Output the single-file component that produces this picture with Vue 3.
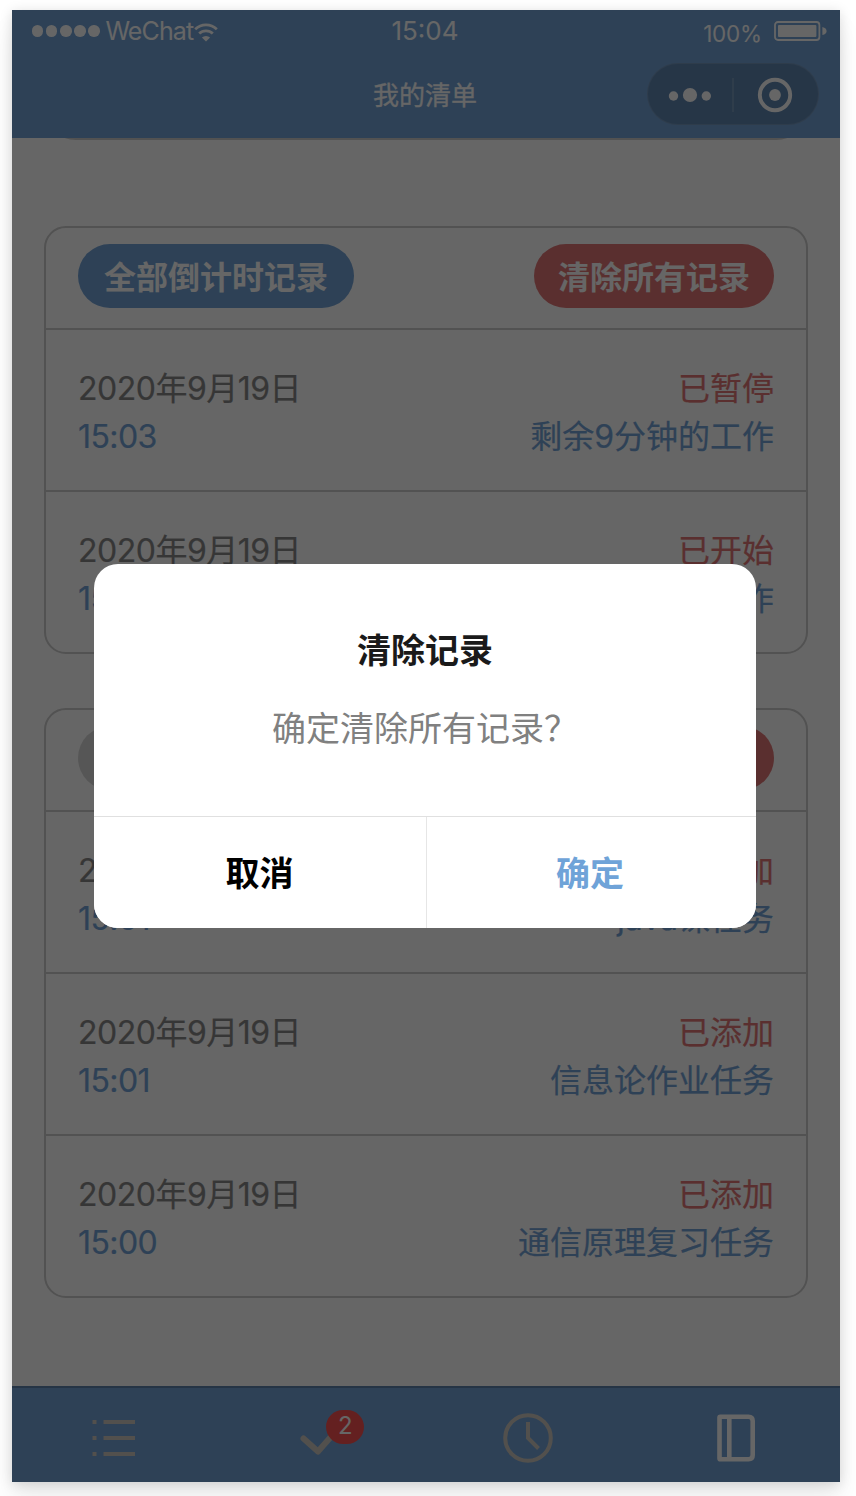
<template>
  <div class="page">
    <div class="phone">
      <header class="top">
        <div class="status">
          <div class="carrier">
            <span v-for="n in 5" :key="n" class="signal"></span>
            <span class="carrier-name">WeChat</span>
            <svg class="wifi" width="24" height="20" viewBox="0 0 24 20">
              <path d="M1.2 7.2a15.5 15.5 0 0 1 21.6 0" fill="none" stroke="#fff" stroke-width="2.8" />
              <path d="M5.2 11.6a9.8 9.8 0 0 1 13.6 0" fill="none" stroke="#fff" stroke-width="2.8" />
              <path d="M12 19.6L7.9 15.6a5.8 5.8 0 0 1 8.2 0z" fill="#fff" />
            </svg>
          </div>
          <span class="clock">15:04</span>
          <div class="battery">
            <span class="percent">100%</span>
            <svg width="53" height="20" viewBox="0 0 53 20">
              <rect x="1" y="1" width="44.4" height="18" rx="3" fill="none" stroke="#fff" stroke-width="1.8" />
              <rect x="4" y="4" width="38.4" height="12" rx="1" fill="#fff" />
              <path d="M48.4 6q4.2 1 4.2 4t-4.2 4z" fill="#fff" />
            </svg>
          </div>
        </div>
        <div class="nav">
          <h1>我的清单</h1>
          <div class="capsule">
            <svg width="170" height="60" viewBox="0 0 170 60">
              <g fill="#fff">
                <circle cx="25.5" cy="32" r="4.7" />
                <circle cx="42" cy="31" r="7.1" />
                <circle cx="58.3" cy="32" r="4.7" />
                <circle cx="127" cy="31" r="5.9" />
              </g>
              <path d="M85 14v34" stroke="#fff" stroke-opacity=".14" stroke-width="2" />
              <circle cx="127" cy="31" r="15.2" fill="none" stroke="#fff" stroke-width="3.9" />
            </svg>
          </div>
        </div>
      </header>

      <main class="content">
        <section class="card card-prev"></section>
        <section v-for="group in groups" :key="group.title" class="card">
          <div class="card-head">
            <button class="pill" :class="group.type">{{ group.title }}</button>
            <button class="pill danger" @click="showModal = true">清除所有记录</button>
          </div>
          <div v-for="(item, i) in group.items" :key="i" class="record">
            <div class="line">
              <span class="date">2020年9月19日</span>
              <span class="state">{{ item.state }}</span>
            </div>
            <div class="line">
              <span class="time">{{ item.time }}</span>
              <span class="name">{{ item.name }}</span>
            </div>
          </div>
        </section>
      </main>

      <footer class="tabs">
        <div class="tab">
          <svg width="48" height="48" viewBox="0 0 48 48" stroke="#cdc8c0" stroke-width="4">
            <path d="M2.5 8h4M2.5 24h4M2.5 40h4M13.5 8H45M13.5 24H45M13.5 40H45" />
          </svg>
        </div>
        <div class="tab">
          <svg width="48" height="48" viewBox="0 0 48 48">
            <path d="M7.5 24.5L22 37.5L40 17" fill="none" stroke="#cdc8c0" stroke-width="6" stroke-linecap="round" stroke-linejoin="round" />
          </svg>
          <span class="badge">2</span>
        </div>
        <div class="tab">
          <svg width="52" height="52" viewBox="0 0 52 52" fill="none" stroke="#cdc8c0" stroke-width="4">
            <circle cx="26" cy="26" r="22.8" />
            <path d="M26 10v16l10.5 10.5" />
          </svg>
        </div>
        <div class="tab">
          <svg width="48" height="48" viewBox="0 0 48 48" fill="none" stroke="#fff" stroke-width="4.6">
            <path d="M10.3 2.8H38.5q4.2 0 4.2 4.2v34q0 4.2-4.2 4.2H10.3q-.8 0-.8-.8V3.6q0-.8.8-.8zM19.3 2.8v42.4" />
          </svg>
        </div>
      </footer>

      <div v-if="showModal" class="mask">
        <div class="modal">
          <div class="modal-body">
            <h2>清除记录</h2>
            <p>确定清除所有记录？</p>
          </div>
          <div class="modal-foot">
            <button @click="showModal = false">取消</button>
            <button class="confirm" @click="clearAll">确定</button>
          </div>
        </div>
      </div>
    </div>
  </div>
</template>

<script setup>
import { ref } from 'vue';

const showModal = ref(true);

const groups = ref([
  {
    title: '全部倒计时记录',
    type: 'primary',
    items: [
      { time: '15:03', state: '已暂停', name: '剩余9分钟的工作' },
      { time: '15:03', state: '已开始', name: '工作' },
    ],
  },
  {
    title: '记录',
    type: 'muted',
    items: [
      { time: '15:01', state: '已添加', name: 'java课任务' },
      { time: '15:01', state: '已添加', name: '信息论作业任务' },
      { time: '15:00', state: '已添加', name: '通信原理复习任务' },
    ],
  },
]);

function clearAll() {
  groups.value.forEach((group) => {
    group.items = [];
  });
  showModal.value = false;
}
</script>

<style>
body {
  background: #fff;
}
</style>

<style scoped>
.page {
  box-sizing: border-box;
  height: 1496px;
  padding: 10px 0 0 12px;
  overflow: hidden;
}

.phone {
  position: relative;
  display: flex;
  flex-direction: column;
  width: 828px;
  height: 1472px;
  background: #fff;
  font-family: Inter, "Noto Sans CJK SC", sans-serif;
  box-shadow: 0 18px 24px rgba(0, 0, 0, 0.07), 0 2px 12px rgba(0, 0, 0, 0.14);
}

button {
  border: none;
  padding: 0;
  font-family: inherit;
}

.top {
  height: 128px;
  flex: none;
  background: #73a3d7;
  color: #fff;
}

.status {
  display: grid;
  grid-template-columns: 1fr auto 1fr;
  align-items: center;
  height: 42px;
  padding: 0 14px 0 20px;
  font-size: 25px;
}

.carrier {
  display: flex;
  align-items: center;
}

.carrier-name {
  margin-left: 3px;
  letter-spacing: -0.9px;
}

.signal {
  width: 11.4px;
  height: 11.4px;
  margin-right: 2.7px;
  border-radius: 50%;
  background: #fff;
}

.wifi {
  margin: 2px 0 0 1px;
}

.clock {
  margin: -2px 8px 0 0;
  font-size: 26px;
}

.battery {
  display: flex;
  justify-content: flex-end;
  align-items: center;
  gap: 12px;
  margin-right: -1px;
  font-size: 22.5px;
}

.percent {
  margin-top: 5px;
  letter-spacing: -0.2px;
}

.nav {
  position: relative;
  display: flex;
  justify-content: center;
  align-items: center;
  height: 86px;
}

.nav h1 {
  margin: -4px 2px 0 0;
  font-size: 26px;
  font-weight: 400;
  -webkit-text-stroke: 0.3px;
}

.capsule {
  position: absolute;
  right: 21px;
  top: 11px;
  box-sizing: border-box;
  width: 172px;
  height: 62px;
  border: 1px solid rgba(255, 255, 255, 0.12);
  border-radius: 31px;
  background: rgba(0, 0, 0, 0.17);
}

.capsule svg {
  display: block;
}

.content {
  flex: 1;
  min-height: 0;
  padding: 0 32px;
  overflow: hidden;
}

.card {
  margin-bottom: 54px;
  border: 2px solid #ccc;
  border-radius: 22px;
}

.card-prev {
  height: 70px;
  margin-top: -72px;
  margin-bottom: 86px;
  border-radius: 32px;
}

.card-head {
  display: flex;
  justify-content: space-between;
  height: 84px;
  padding: 16px 32px 0;
}

.pill {
  height: 64px;
  padding: 0 26px 2px;
  border-radius: 32px;
  color: #fff;
  font-size: 32px;
  font-weight: 700;
}

.primary {
  background: #73a3d7;
}

.muted {
  background: #d8d8d8;
}

.danger {
  background: #e17777;
  padding: 0 24px 2px;
}

.record {
  height: 125px;
  padding: 35px 32px 0;
  border-top: 2px solid #ccc;
}

.line {
  display: flex;
  justify-content: space-between;
  height: 48px;
  font-size: 32px;
  line-height: 48px;
  -webkit-text-stroke: 0.2px;
}

.date {
  color: #888;
  letter-spacing: -0.5px;
}

.time {
  letter-spacing: -0.6px;
}

.time,
.name {
  color: #73a3d7;
}

.state {
  color: #e17777;
}

.tabs {
  display: flex;
  flex: none;
  box-sizing: border-box;
  height: 96px;
  padding: 6px 3px 0 0;
  border-top: 2px solid #5c82ac;
  background: #73a3d7;
}

.tab {
  position: relative;
  display: flex;
  flex: 1;
  justify-content: center;
  align-items: center;
}

.tab:first-child,
.tab:nth-child(2) {
  left: -1px;
}

.badge {
  position: absolute;
  left: 109px;
  top: 16px;
  width: 38px;
  height: 34px;
  border-radius: 17px;
  background: #fa5151;
  color: #fff;
  font-size: 24px;
  line-height: 32px;
  text-align: center;
}

.mask {
  position: absolute;
  inset: 0;
  background: rgba(0, 0, 0, 0.6);
}

.modal {
  position: absolute;
  left: 82px;
  top: 554px;
  display: flex;
  flex-direction: column;
  width: 662px;
  height: 364px;
  border-radius: 24px;
  background: #fff;
  overflow: hidden;
}

.modal-body {
  flex: 1;
  text-align: center;
}

.modal-body h2 {
  margin: 63px 0 0;
  color: #1a1a1a;
  font-size: 34px;
  line-height: 48px;
}

.modal-body p {
  margin: 30px 0 0;
  color: #808080;
  font-size: 34px;
  line-height: 48px;
}

.modal-foot {
  display: flex;
  height: 111px;
  border-top: 1px solid #e0e0e0;
}

.modal-foot button {
  width: 332px;
  padding: 0 1px 3px 0;
  background: #fff;
  color: #000;
  font-size: 34px;
  font-weight: 700;
}

.modal-foot .confirm {
  width: 330px;
  padding-right: 3px;
  border-left: 1px solid #e6e6e6;
  color: #6fa3d8;
}
</style>
